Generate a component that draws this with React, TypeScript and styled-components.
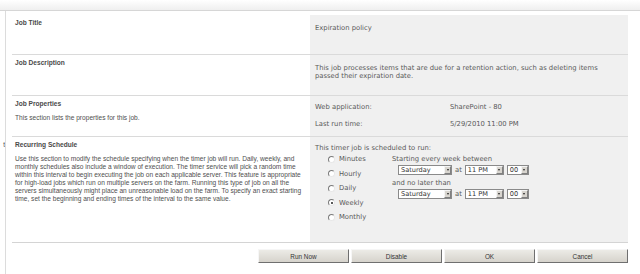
import styled, { createGlobalStyle } from 'styled-components';

const GlobalStyle = createGlobalStyle`
	html, body {
		margin: 0;
		padding: 0;
		background: #ffffff;
	}
	body {
		font-family: 'DejaVu Sans', Verdana, sans-serif;
		color: #555555;
	}
`;

const TopBand = styled.div`
	height: 10px;
	background: linear-gradient(#ffffff, #efefef);
	border-bottom: 1px solid #d6d6d6;
`;

const Body = styled.div`
	display: flex;
	height: 263px;
`;

const Rail = styled.div`
	width: 5px;
	border-right: 1px solid #dcdcdc;
	overflow: hidden;
	padding-top: 130px;
	font-family: 'Liberation Sans', Arial, sans-serif;
	font-size: 6.5px;
	color: #444444;
	text-align: right;
	white-space: nowrap;
	direction: rtl;
`;

const Main = styled.div`
	padding-left: 6px;
	padding-top: 4px;
	width: 616px;
`;

const Table = styled.div`
	display: grid;
	grid-template-columns: 298px 318px;
	border-bottom: 1px solid #d4d4d4;
`;

const LabelCell = styled.div<{ h: number }>`
	height: ${({ h }) => h}px;
	box-sizing: border-box;
	padding: 4px 3px 0 3px;
	border-bottom: 1px solid #dadada;
	font-family: 'Liberation Sans', Tahoma, Arial, sans-serif;
	font-size: 6.6px;
	line-height: 8px;
	color: #4f4f4f;
	&:nth-last-child(2) {
		border-bottom: none;
	}
`;

const Heading = styled.div`
	font-weight: bold;
	font-size: 6.6px;
	color: #4a4a4a;
	margin-bottom: 6px;
`;

const ValueCell = styled.div<{ h: number; top?: number }>`
	height: ${({ h }) => h}px;
	box-sizing: border-box;
	background: #f0f0f0;
	padding: ${({ top }) => top ?? 9}px 10px 0 5px;
	border-bottom: 1px solid #dadada;
	font-size: 6.8px;
	line-height: 8px;
	color: #5a5a5a;
	&:last-child {
		border-bottom: none;
	}
`;

const PropGrid = styled.div`
	display: grid;
	grid-template-columns: 135px 1fr;
	row-gap: 9px;
`;

const Schedule = styled.div`
	display: flex;
	margin-top: 3px;
`;

const RadioList = styled.div`
	display: flex;
	flex-direction: column;
	gap: 6.5px;
	padding-left: 13px;
	width: 64px;
`;

const RadioRow = styled.div`
	display: flex;
	align-items: center;
	gap: 4px;
	height: 8px;
`;

const Radio = styled.span<{ checked?: boolean }>`
	width: 5px;
	height: 5px;
	border-radius: 50%;
	border: 1px solid;
	border-color: #7a7a7a #e8e8e8 #e8e8e8 #7a7a7a;
	background: #ffffff;
	display: inline-flex;
	align-items: center;
	justify-content: center;
	&::after {
		content: '';
		width: 2px;
		height: 2px;
		border-radius: 50%;
		background: ${({ checked }) => (checked ? '#222222' : 'transparent')};
	}
`;

const Times = styled.div`
	display: flex;
	flex-direction: column;
`;

const SelectRow = styled.div`
	display: flex;
	align-items: center;
	gap: 3px;
	padding-left: 6px;
	height: 12px;
	margin: 1px 0 3px;
`;

const Select = styled.div<{ w: number }>`
	width: ${({ w }) => w}px;
	height: 10px;
	box-sizing: border-box;
	border: 1px solid #8a8a8a;
	background: #ffffff;
	display: flex;
	align-items: center;
	justify-content: space-between;
	padding-left: 2px;
	font-size: 6.6px;
	color: #333333;
`;

const Arrow = styled.span`
	width: 7px;
	height: 8px;
	box-sizing: border-box;
	background: #d8d5cf;
	border: 1px solid;
	border-color: #f4f4f4 #808080 #808080 #f4f4f4;
	display: inline-flex;
	align-items: center;
	justify-content: center;
	&::after {
		content: '';
		border-left: 1.5px solid transparent;
		border-right: 1.5px solid transparent;
		border-top: 2px solid #222222;
	}
`;

const Buttons = styled.div`
	display: flex;
	justify-content: flex-end;
	gap: 2px;
	width: 616px;
	margin-top: 6px;
`;

const Button = styled.div`
	width: 91px;
	height: 14px;
	box-sizing: border-box;
	background: linear-gradient(#ecebe6, #d6d3cc);
	border: 1px solid;
	border-color: #f6f6f6 #6f6f6f #6f6f6f #f6f6f6;
	display: flex;
	align-items: center;
	justify-content: center;
	font-family: 'Liberation Sans', Tahoma, Arial, sans-serif;
	font-size: 6.4px;
	color: #333333;
`;

const radios = ['Minutes', 'Hourly', 'Daily', 'Weekly', 'Monthly'];

const TimeSelects = () => (
	<SelectRow>
		<Select w={54}>
			Saturday <Arrow />
		</Select>
		<span>at</span>
		<Select w={39}>
			11 PM <Arrow />
		</Select>
		<Select w={22}>
			00 <Arrow />
		</Select>
	</SelectRow>
);

export default function App() {
	return (
		<>
			<GlobalStyle />
			<TopBand />
			<Body>
				<Rail>t</Rail>
				<Main>
					<Table>
						<LabelCell h={40}>
							<Heading>Job Title</Heading>
						</LabelCell>
						<ValueCell h={40}>Expiration policy</ValueCell>

						<LabelCell h={41}>
							<Heading>Job Description</Heading>
						</LabelCell>
						<ValueCell h={41}>
							This job processes items that are due for a retention action, such as deleting items
							passed their expiration date.
						</ValueCell>

						<LabelCell h={41}>
							<Heading>Job Properties</Heading>
							This section lists the properties for this job.
						</LabelCell>
						<ValueCell h={41} top={7}>
							<PropGrid>
								<span>Web application:</span>
								<span>SharePoint - 80</span>
								<span>Last run time:</span>
								<span>5/29/2010 11:00 PM</span>
							</PropGrid>
						</ValueCell>

						<LabelCell h={105}>
							<Heading>Recurring Schedule</Heading>
							Use this section to modify the schedule specifying when the timer job will run. Daily,
							weekly, and monthly schedules also include a window of execution. The timer service
							will pick a random time within this interval to begin executing the job on each
							applicable server. This feature is appropriate for high-load jobs which run on multiple
							servers on the farm. Running this type of job on all the servers simultaneously might
							place an unreasonable load on the farm. To specify an exact starting time, set the
							beginning and ending times of the interval to the same value.
						</LabelCell>
						<ValueCell h={105} top={7}>
							This timer job is scheduled to run:
							<Schedule>
								<RadioList>
									{radios.map((r) => (
										<RadioRow key={r}>
											<Radio checked={r === 'Weekly'} />
											{r}
										</RadioRow>
									))}
								</RadioList>
								<Times>
									<span>Starting every week between</span>
									<TimeSelects />
									<span>and no later than</span>
									<TimeSelects />
								</Times>
							</Schedule>
						</ValueCell>
					</Table>
					<Buttons>
						<Button>Run Now</Button>
						<Button>Disable</Button>
						<Button>OK</Button>
						<Button>Cancel</Button>
					</Buttons>
				</Main>
			</Body>
		</>
	);
}
